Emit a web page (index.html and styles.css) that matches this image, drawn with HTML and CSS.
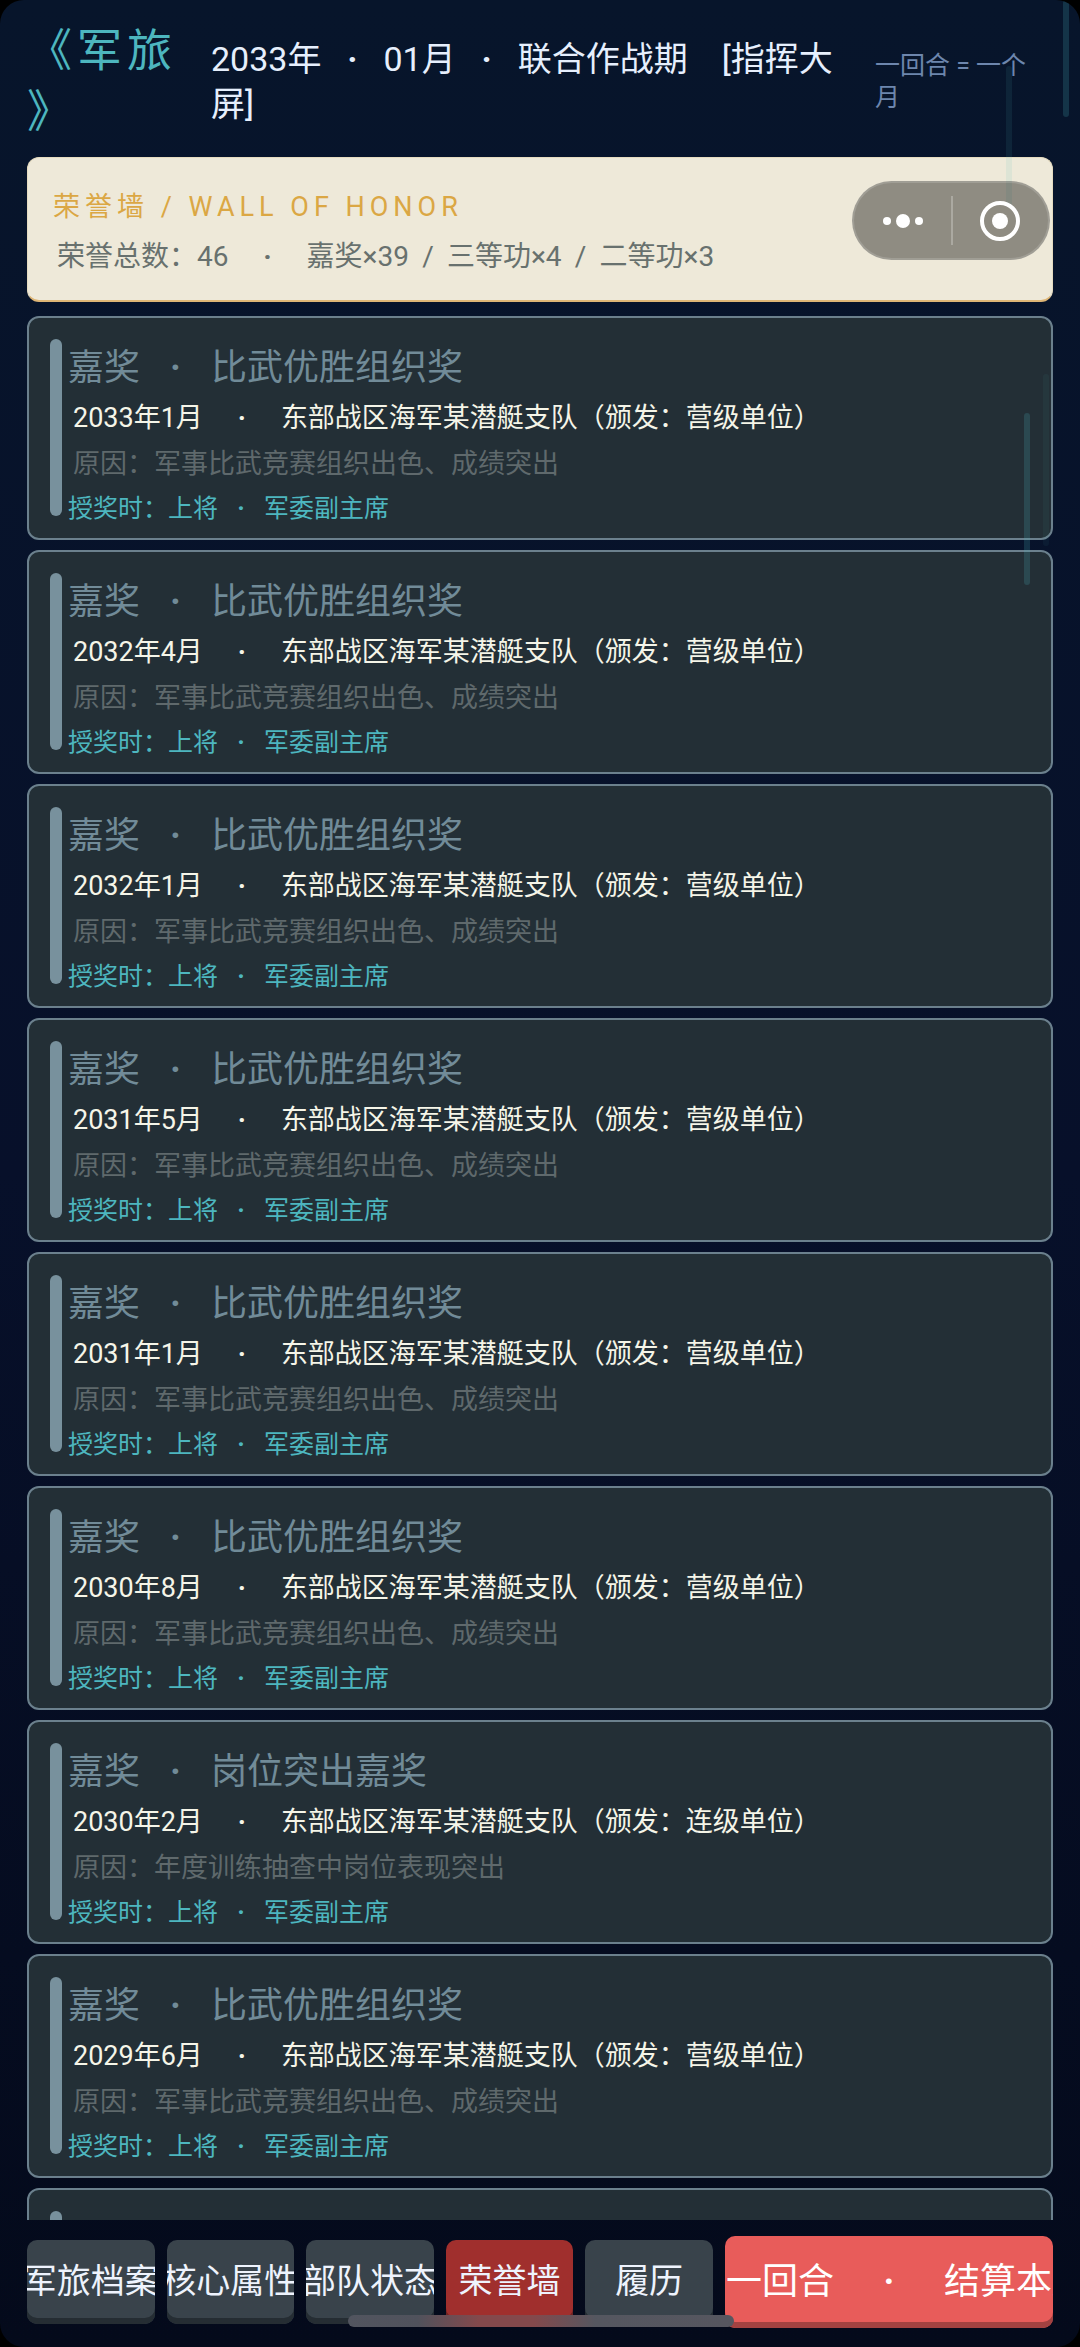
FILE: index.html
```html
<!DOCTYPE html>
<html lang="zh-CN">
<head>
    <meta charset="UTF-8">
    <meta name="viewport" content="width=device-width, initial-scale=1">
    <title>军旅 - 荣誉墙</title>
    <link rel="stylesheet" href="styles.css">
</head>
<body>
<div class="screen">
    <header class="top">
        <h1 class="logo">《军旅》</h1>
        <p class="date">2033年<i class="dot">·</i>01月<i class="dot">·</i>联合作战期　[指挥大屏]</p>
        <p class="tip">一回合 = 一个月</p>
    </header>

    <section class="wall">
        <h2>荣誉墙 / WALL OF HONOR</h2>
        <p>荣誉总数：46<i class="dot">·</i>嘉奖×39<i class="slash">/</i>三等功×4<i class="slash">/</i>二等功×3</p>
    </section>

    <main class="list">
        <article class="card">
            <div class="info">
                <h3>嘉奖<i class="dot">·</i>比武优胜组织奖</h3>
                <p class="unit">2033年1月<i class="dot">·</i>东部战区海军某潜艇支队（颁发：营级单位）</p>
                <p class="reason">原因：军事比武竞赛组织出色、成绩突出</p>
                <p class="rank">授奖时：上将<i class="dot">·</i>军委副主席</p>
            </div>
        </article>
        <article class="card">
            <div class="info">
                <h3>嘉奖<i class="dot">·</i>比武优胜组织奖</h3>
                <p class="unit">2032年4月<i class="dot">·</i>东部战区海军某潜艇支队（颁发：营级单位）</p>
                <p class="reason">原因：军事比武竞赛组织出色、成绩突出</p>
                <p class="rank">授奖时：上将<i class="dot">·</i>军委副主席</p>
            </div>
        </article>
        <article class="card">
            <div class="info">
                <h3>嘉奖<i class="dot">·</i>比武优胜组织奖</h3>
                <p class="unit">2032年1月<i class="dot">·</i>东部战区海军某潜艇支队（颁发：营级单位）</p>
                <p class="reason">原因：军事比武竞赛组织出色、成绩突出</p>
                <p class="rank">授奖时：上将<i class="dot">·</i>军委副主席</p>
            </div>
        </article>
        <article class="card">
            <div class="info">
                <h3>嘉奖<i class="dot">·</i>比武优胜组织奖</h3>
                <p class="unit">2031年5月<i class="dot">·</i>东部战区海军某潜艇支队（颁发：营级单位）</p>
                <p class="reason">原因：军事比武竞赛组织出色、成绩突出</p>
                <p class="rank">授奖时：上将<i class="dot">·</i>军委副主席</p>
            </div>
        </article>
        <article class="card">
            <div class="info">
                <h3>嘉奖<i class="dot">·</i>比武优胜组织奖</h3>
                <p class="unit">2031年1月<i class="dot">·</i>东部战区海军某潜艇支队（颁发：营级单位）</p>
                <p class="reason">原因：军事比武竞赛组织出色、成绩突出</p>
                <p class="rank">授奖时：上将<i class="dot">·</i>军委副主席</p>
            </div>
        </article>
        <article class="card">
            <div class="info">
                <h3>嘉奖<i class="dot">·</i>比武优胜组织奖</h3>
                <p class="unit">2030年8月<i class="dot">·</i>东部战区海军某潜艇支队（颁发：营级单位）</p>
                <p class="reason">原因：军事比武竞赛组织出色、成绩突出</p>
                <p class="rank">授奖时：上将<i class="dot">·</i>军委副主席</p>
            </div>
        </article>
        <article class="card">
            <div class="info">
                <h3>嘉奖<i class="dot">·</i>岗位突出嘉奖</h3>
                <p class="unit">2030年2月<i class="dot">·</i>东部战区海军某潜艇支队（颁发：连级单位）</p>
                <p class="reason">原因：年度训练抽查中岗位表现突出</p>
                <p class="rank">授奖时：上将<i class="dot">·</i>军委副主席</p>
            </div>
        </article>
        <article class="card">
            <div class="info">
                <h3>嘉奖<i class="dot">·</i>比武优胜组织奖</h3>
                <p class="unit">2029年6月<i class="dot">·</i>东部战区海军某潜艇支队（颁发：营级单位）</p>
                <p class="reason">原因：军事比武竞赛组织出色、成绩突出</p>
                <p class="rank">授奖时：上将<i class="dot">·</i>军委副主席</p>
            </div>
        </article>
        <!-- 下一张只露出顶部 -->
        <article class="card">
            <div class="info"></div>
        </article>
    </main>

    <nav class="tabs">
        <button type="button"><span>军旅档案</span></button>
        <button type="button"><span>核心属性</span></button>
        <button type="button"><span>部队状态</span></button>
        <button type="button" class="on"><span>荣誉墙</span></button>
        <button type="button"><span>履历</span></button>
        <button type="button" class="next"><span>下一回合<i class="dot">·</i>结算本月</span></button>
    </nav>

    <!-- 背景光条 -->
    <div class="ray ray1"></div>
    <div class="ray ray2"></div>
    <div class="ray ray3"></div>
    <div class="ray ray4"></div>

    <!-- 小程序胶囊 -->
    <div class="capsule">
        <button type="button" aria-label="更多">
            <svg width="42" height="16" viewBox="0 0 42 16"><circle cx="5" cy="8" r="4"/><circle cx="21" cy="8" r="7"/><circle cx="37" cy="8" r="4"/></svg>
        </button>
        <button type="button" aria-label="关闭">
            <svg width="42" height="42" viewBox="0 0 42 42"><circle cx="21" cy="21" r="18" fill="none" stroke="#fff" stroke-width="4"/><circle cx="21" cy="21" r="8"/></svg>
        </button>
    </div>
    <div class="home"></div>
</div>
</body>
</html>
```

FILE: styles.css
```css
*{
    margin:0;
    padding:0;
    box-sizing:border-box;
}
body{
    background:#000;
    font-family:Roboto, "Noto Sans CJK SC", sans-serif;
}
h1,h2,h3{
    font-weight:400;
}
i{
    font-style:normal;
}
button{
    border:0;
    background:none;
    font-family:inherit;
    color:inherit;
}
.dot,.slash{
    display:inline-block;
    text-align:center;
}
.dot{
    font-weight:700;
}
.slash{
    width:38px;
}
.screen{
    position:relative;
    display:flex;
    flex-direction:column;
    height:100vh;
    padding:0 27px;
    overflow:hidden;
    border-radius:24px;
    background:linear-gradient(#07152b,#07102a 50%,#040a1b);
}

/* 顶部 */
.top{
    display:flex;
    align-items:center;
    padding:21px 0 14px;
}
.logo{
    flex:none;
    width:184px;
    padding-right:24px;
    line-height:61px;
    font-size:45px;
    letter-spacing:5px;
    line-break:anywhere;
    color:#4db6bf;
}
.date{
    flex:1;
    padding-right:30px;
    line-height:45px;
    font-size:34px;
    line-break:anywhere;
    color:#e6effd;
}
.date .dot{
    width:62px;
}
.tip{
    flex:none;
    width:178px;
    padding-right:13px;
    line-height:32px;
    font-size:25px;
    line-break:anywhere;
    color:#6d86ad;
}

/* 荣誉墙 */
.wall{
    flex:none;
    height:145px;
    padding:24px 25px 0;
    border:1px solid #e6dcc0;
    border-bottom:2px solid #deb676;
    border-radius:12px;
    background:#eee9d9;
}
.wall h2{
    line-height:50px;
    font-size:27px;
    letter-spacing:5px;
    color:#dba744;
}
.wall p{
    padding-left:4px;
    line-height:50px;
    font-size:28px;
    color:#68716e;
}
.wall .dot{
    width:78px;
}

/* 列表 */
.list{
    flex:1;
    min-height:0;
    margin-top:14px;
    overflow:hidden;
}
.card{
    display:flex;
    min-height:224px;
    margin-bottom:10px;
    padding:21px 21px 7px;
    border:2px solid #6b808d;
    border-radius:12px;
    background:#232f36;
}
.card:before{
    content:"";
    width:12px;
    margin:0 6px 15px 0;
    border-radius:6px;
    background:#78919d;
}
.info{
    padding-top:2px;
}
.card h3{
    line-height:54px;
    font-size:36px;
    color:#718b98;
}
.card h3 .dot{
    width:71px;
}
.unit,.reason{
    padding-left:5px;
    line-height:46px;
    font-size:27px;
    color:#f5f5e8;
}
.unit .dot{
    width:78px;
}
.reason{
    color:#5f696c;
}
.rank{
    line-height:44px;
    font-size:25px;
    color:#4db6bf;
}
.rank .dot{
    width:46px;
}

/* 底部 */
.tabs{
    display:grid;
    grid-template-columns:repeat(5,7fr) 18fr;
    gap:12px;
    align-items:center;
    padding:16px 0 19px;
}
.tabs button{
    display:flex;
    align-items:center;
    justify-content:center;
    min-width:0;
    height:84px;
    padding-bottom:8px;
    overflow:hidden;
    border-radius:10px;
    background:#39434b;
    box-shadow:inset 0 -6px #252d33;
    font-size:34px;
    white-space:nowrap;
    color:#eef3fd;
}
.tabs .on{
    background:#a02f2d;
    box-shadow:inset 0 -6px #702423;
}
.tabs .next{
    height:92px;
    background:#e85c5a;
    box-shadow:inset 0 -6px #a34241;
    font-size:36px;
    color:#fff;
}
.tabs .next .dot{
    width:110px;
}

/* 光条 */
.ray{
    position:absolute;
    width:6px;
    border-radius:3px;
    background:#4db6bf;
    pointer-events:none;
}
.ray1{
    top:0;
    right:11px;
    height:117px;
    opacity:.2;
}
.ray2{
    top:66px;
    right:68px;
    height:140px;
    opacity:.1;
}
.ray3{
    top:374px;
    right:31px;
    height:172px;
    opacity:.06;
}
.ray4{
    top:413px;
    right:50px;
    height:172px;
    opacity:.2;
}

/* 胶囊 */
.capsule{
    position:absolute;
    top:181px;
    right:30px;
    display:flex;
    width:198px;
    height:79px;
    border:2px solid rgba(255,255,255,.15);
    border-radius:40px;
    background:rgba(0,0,0,.4);
}
.capsule button{
    flex:1;
    display:flex;
    align-items:center;
    justify-content:center;
    position:relative;
}
.capsule button + button:before{
    content:"";
    position:absolute;
    left:0;
    top:13px;
    bottom:13px;
    width:2px;
    background:rgba(255,255,255,.25);
}
.capsule svg{
    fill:#fff;
}
.home{
    position:absolute;
    left:50%;
    bottom:20px;
    width:386px;
    height:12px;
    margin-left:-192px;
    border-radius:6px;
    background:linear-gradient(90deg,#52555f,#50525c 18%,#84494c 34%,#84494c 48%,#555760 64%,#56565f);
}
```
